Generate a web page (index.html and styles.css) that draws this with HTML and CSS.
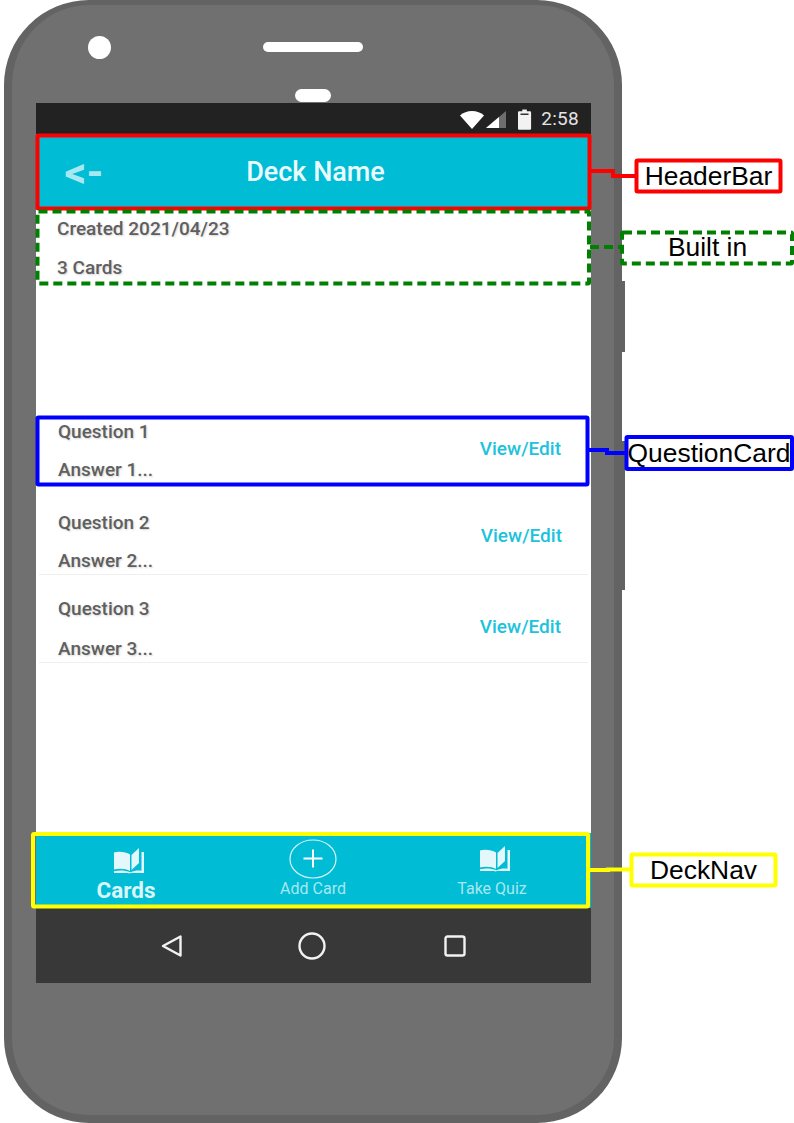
FILE: index.html
```html
<!DOCTYPE html>
<html lang="en">
<head>
    <meta charset="UTF-8">
    <title>Deck wireframe</title>
    <link rel="stylesheet" href="styles.css">
</head>
<body>
    <div class="phone">
        <div class="side-btn side-btn-top"></div>
        <div class="side-btn side-btn-bottom"></div>
        <div class="sensors">
            <div class="sensor-row">
                <div class="camera"></div>
                <div class="speaker"></div>
            </div>
            <div class="sensor-pill"></div>
        </div>
        <div class="screen">
            <div class="status-bar">
                <svg class="status-icons" width="72" height="22" viewBox="0 0 72 22">
                    <path d="M0 7.5C3 4.5 7.500 3 12 3s9 1.500 12 4.500L12 21z" fill="#fff"/>
                    <path d="M26 20L46 3v17z" fill="#6e6e6e"/>
                    <path d="M26 20L39 9v11z" fill="#fff"/>
                    <path d="M58 4.500c0-.8.5-1.300 1.300-1.300h3V1.500h4.500v1.700h3c.8 0 1.300.5 1.300 1.300v16c0 .8-.5 1.300-1.300 1.300h-10.500c-.8 0-1.300-.5-1.300-1.300z" fill="#f2f2f2"/>
                    <rect x="60.500" y="5.500" width="8" height="1.500" fill="#333"/>
                </svg>
                <span class="status-time">2:58</span>
            </div>
            <header class="header-bar">
                <span class="back-link">&lt;-</span>
                <h1 class="header-title">Deck Name</h1>
            </header>
            <div class="deck-info">
                <p>Created 2021/04/23</p>
                <p>3 Cards</p>
            </div>
            <div class="card-list">
                <div class="question-card">
                    <div class="question-text">
                        <p>Question 1</p>
                        <p class="answer">Answer 1...</p>
                    </div>
                    <a class="view-link">View/Edit</a>
                </div>
                <div class="question-card">
                    <div class="question-text">
                        <p>Question 2</p>
                        <p class="answer">Answer 2...</p>
                    </div>
                    <a class="view-link">View/Edit</a>
                </div>
                <div class="question-card">
                    <div class="question-text">
                        <p>Question 3</p>
                        <p class="answer">Answer 3...</p>
                    </div>
                    <a class="view-link">View/Edit</a>
                </div>
            </div>
            <nav class="deck-nav">
                <div class="nav-tab nav-tab-active">
                    <svg class="book-icon" width="32" height="27" viewBox="0 0 32 27">
                        <use href="#book"/>
                    </svg>
                    <span>Cards</span>
                </div>
                <div class="nav-tab">
                    <svg width="48" height="40" viewBox="0 0 48 40">
                        <ellipse cx="24" cy="20" rx="23" ry="19" fill="none" stroke="#d9f5fa" stroke-width="1.200"/>
                        <path d="M24 10.500v18M14.500 19.500h19" fill="none" stroke="#fff" stroke-width="2"/>
                    </svg>
                    <span>Add Card</span>
                </div>
                <div class="nav-tab">
                    <svg class="book-icon" width="32" height="27" viewBox="0 0 32 27">
                        <use href="#book"/>
                    </svg>
                    <span>Take Quiz</span>
                </div>
            </nav>
            <div class="soft-keys">
                <svg width="24" height="26" viewBox="0 0 24 26">
                    <path d="M3 13L20.500 3.500v19z" fill="none" stroke="#f2f2f2" stroke-width="2.400" stroke-linejoin="round"/>
                </svg>
                <svg width="28" height="28" viewBox="0 0 28 28">
                    <circle cx="14" cy="14" r="12.500" fill="none" stroke="#f2f2f2" stroke-width="2.400"/>
                </svg>
                <svg width="30" height="26" viewBox="0 0 30 26">
                    <rect x="5.500" y="3.500" width="19" height="19" rx="2" fill="none" stroke="#f2f2f2" stroke-width="2.400"/>
                </svg>
            </div>
        </div>
    </div>

    <!-- book icon shared by the nav tabs -->
    <svg class="defs" width="0" height="0">
        <g id="book" fill="#e4f8fc">
            <path d="M1 5.500C6 4 13 5 17 7.500V24C13 21.500 6 21 1 22.500z"/>
            <path d="M18.500 8L26 1v15l-7.500 7z"/>
            <path d="M28.500 5H31v21H18c-1 .5-2 .5-3 0H1v-1.800c5-1.200 11-1 16.500 1 4-1.800 7.500-2.200 11-1.400z"/>
        </g>
    </svg>

    <!-- annotations on top of the mockup -->
    <div class="note note-header">HeaderBar</div>
    <div class="note note-built">Built in</div>
    <div class="note note-card">QuestionCard</div>
    <div class="note note-nav">DeckNav</div>
    <svg class="marks" width="794" height="1123" viewBox="0 0 794 1123">
        <g class="mark-red">
            <rect x="37.500" y="135.500" width="552" height="73" rx="1"/>
            <path d="M590 171H613V176H636"/>
            <rect x="636.500" y="160.500" width="144" height="31" rx="1"/>
        </g>
        <g class="mark-green">
            <rect x="37.500" y="211.500" width="551.500" height="72" rx="1"/>
            <path d="M590 247H622"/>
            <rect x="622" y="232.500" width="170" height="31" rx="1"/>
        </g>
        <g class="mark-blue">
            <rect x="37.500" y="417.500" width="550" height="67" rx="1"/>
            <path d="M589 450H607V453H626"/>
            <rect x="626.500" y="437" width="165.500" height="32" rx="1"/>
        </g>
        <g class="mark-yellow">
            <rect x="33" y="834" width="555" height="72.500" rx="1"/>
            <path d="M590 870H608V869.500H631"/>
            <rect x="631.500" y="854.500" width="144" height="31" rx="1"/>
        </g>
    </svg>
</body>
</html>
```

FILE: styles.css
```css
body {
    margin: 0;
    width: 794px;
    height: 1123px;
    overflow: hidden;
    position: relative;
    background-color: #fff;
    font-family: Roboto, sans-serif;
}
p {
    margin: 0;
}
.phone {
    position: relative;
    box-sizing: border-box;
    width: 618px;
    height: 1123px;
    margin-left: 4px;
    padding-left: 23.5px;
    background-color: #707070;
    border-style: solid;
    border-color: #636363;
    border-width: 5px 8.5px 8px 8px;
    border-radius: 85px / 85px;
}
.side-btn {
    position: absolute;
    left: 609.5px;
    width: 3px;
    background-color: #636363;
}
.side-btn-top {
    top: 276px;
    height: 71px;
}
.side-btn-bottom {
    top: 436px;
    height: 149px;
}
.sensors {
    height: 98px;
}
.sensor-row {
    display: flex;
    align-items: center;
    height: 84px;
}
.camera {
    width: 23px;
    height: 23px;
    border-radius: 50%;
    background-color: #fff;
    margin-left: 52px;
}
.speaker {
    width: 100px;
    height: 10px;
    border-radius: 5px;
    background-color: #fff;
    margin-left: 152px;
}
.sensor-pill {
    width: 36px;
    height: 13px;
    border-radius: 7px;
    background-color: #fff;
    margin-left: 259px;
}
.screen {
    display: flex;
    flex-direction: column;
    width: 555.5px;
    height: 880px;
    background-color: #fff;
}
.status-bar {
    display: flex;
    align-items: center;
    justify-content: flex-end;
    height: 31px;
    flex-shrink: 0;
    padding-right: 12px;
    background-color: #222;
}
.status-icons {
    margin-right: 9px;
}
.status-time {
    color: #e4e4e4;
    font-size: 19px;
    letter-spacing: 0.3px;
}
.header-bar {
    display: flex;
    align-items: center;
    height: 76px;
    flex-shrink: 0;
    position: relative;
    background-color: #00bcd4;
}
.back-link {
    margin-left: 29px;
    color: #a8e8f1;
    font-size: 43px;
    font-weight: 700;
    line-height: 76px;
}
.header-title {
    position: absolute;
    left: 0;
    width: 560px;
    margin: 0;
    text-align: center;
    color: #e9fbfe;
    font-size: 27px;
    font-weight: 500;
}
.deck-info {
    height: 75px;
    box-sizing: border-box;
    flex-shrink: 0;
    padding-left: 21.5px;
    color: #5f5f5f;
    font-size: 19px;
    font-weight: 500;
    line-height: 38.5px;
    text-shadow: 1px 1px 2px #d4d4d4;
}
.card-list {
    flex: 1;
}
.question-card {
    display: flex;
    justify-content: space-between;
    margin: 0 3px;
    padding: 0 27px 0 19.5px;
    border-bottom: 1px solid #eee;
    color: #5f5f5f;
    font-size: 19px;
    font-weight: 500;
    line-height: 26px;
    text-shadow: 1px 1px 2px #d4d4d4;
}
.question-card:nth-child(1) {
    margin-top: 134px;
    border-bottom-color: transparent;
}
.question-card:nth-child(2) {
    margin-top: 26px;
    padding-right: 26px;
}
.question-card:nth-child(3) {
    margin-top: 21px;
}
.answer {
    margin-top: 12px;
}
.question-card:nth-child(3) .answer {
    margin-top: 14px;
}
.view-link {
    color: #1cc3dc;
    margin-top: 17px;
    text-shadow: none;
}
.question-card:nth-child(2) .view-link {
    margin-top: 13px;
}
.question-card:nth-child(3) .view-link {
    margin-top: 18px;
}
.deck-nav {
    display: grid;
    grid-template-columns: 181px 193px 165px;
    height: 75px;
    flex-shrink: 0;
    background-color: #00bcd4;
}
.nav-tab {
    display: flex;
    flex-direction: column;
    align-items: center;
    justify-content: flex-end;
    padding-bottom: 9px;
    color: #a8e8f1;
    font-size: 16px;
    line-height: 20px;
}
.book-icon {
    margin: 0 0 7px 6px;
}
.nav-tab-active {
    color: #d9f6fb;
    font-size: 22.500px;
    font-weight: 700;
}
.nav-tab-active span {
    margin-bottom: -1px;
}
.nav-tab-active .book-icon {
    margin-bottom: 6px;
}
.soft-keys {
    display: flex;
    align-items: center;
    gap: 114px;
    height: 75px;
    flex-shrink: 0;
    padding-left: 124.5px;
    background-color: #383838;
}
.defs {
    position: absolute;
}
.note {
    position: absolute;
    box-sizing: border-box;
    display: flex;
    align-items: center;
    justify-content: center;
    background-color: #fff;
    color: #000;
    font-family: "Liberation Sans", Arial, sans-serif;
    font-size: 26.4px;
}
.note-header {
    left: 636px;
    top: 160px;
    width: 145px;
    height: 32px;
}
.note-built {
    left: 622px;
    top: 231px;
    width: 171px;
    height: 32px;
}
.note-card {
    left: 626px;
    top: 437px;
    width: 166px;
    height: 32px;
}
.note-nav {
    left: 631px;
    top: 854px;
    width: 145px;
    height: 32px;
}
.marks {
    position: absolute;
    left: 0;
    top: 0;
    fill: none;
    stroke-width: 4;
}
.mark-red {
    stroke: #f00;
}
.mark-green {
    stroke: #008000;
    stroke-dasharray: 9 5;
}
.mark-blue {
    stroke: #00f;
}
.mark-yellow {
    stroke: #ff0;
}
```
